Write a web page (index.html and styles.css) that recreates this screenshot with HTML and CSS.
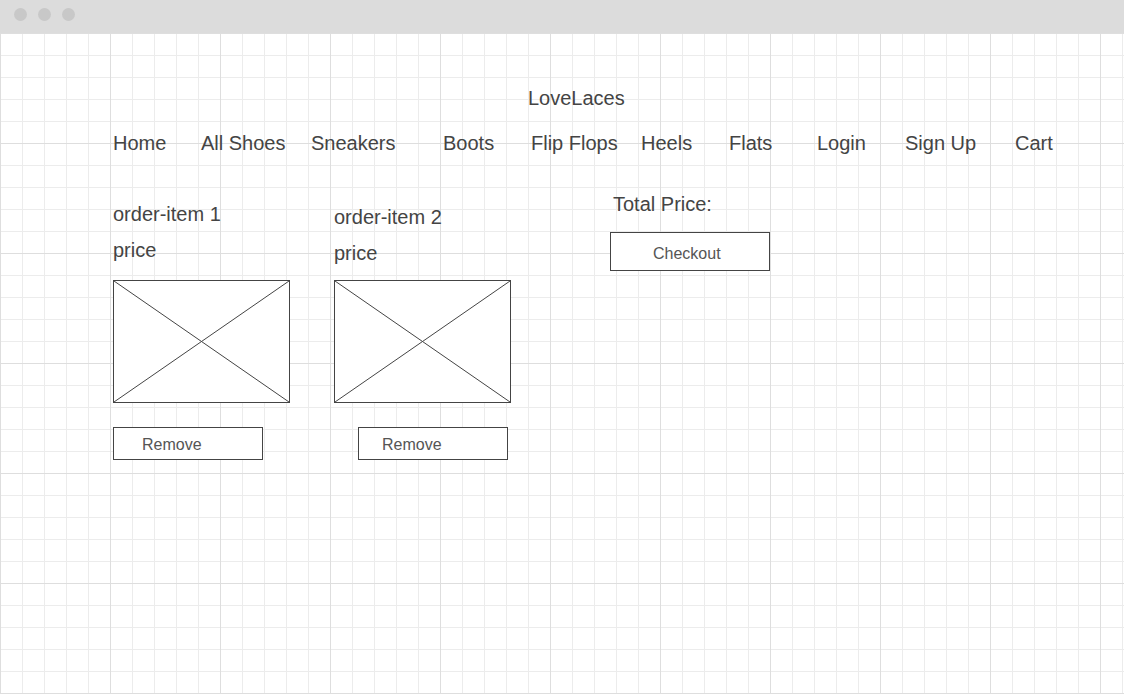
FILE: index.html
```html
<!DOCTYPE html>
<html lang="en">
<head>
    <meta charset="UTF-8">
    <meta name="viewport" content="width=device-width, initial-scale=1.0">
    <title>LoveLaces - Cart</title>
    <link rel="stylesheet" href="styles.css">
</head>
<body>
    <div class="window">
        <!-- Browser chrome -->
        <div class="titlebar">
            <span class="dot"></span>
            <span class="dot"></span>
            <span class="dot"></span>
        </div>

        <div class="canvas">
            <header class="site-header">
                <div class="brand">LoveLaces</div>
                <nav class="nav">
                    <a class="nav-link" href="#">Home</a>
                    <a class="nav-link span-5" href="#">All Shoes</a>
                    <a class="nav-link span-6" href="#">Sneakers</a>
                    <a class="nav-link" href="#">Boots</a>
                    <a class="nav-link span-5" href="#">Flip Flops</a>
                    <a class="nav-link" href="#">Heels</a>
                    <a class="nav-link" href="#">Flats</a>
                    <a class="nav-link" href="#">Login</a>
                    <a class="nav-link span-5" href="#">Sign Up</a>
                    <a class="nav-link" href="#">Cart</a>
                </nav>
            </header>

            <main class="cart">
                <section class="order-item">
                    <div class="item-name">order-item 1</div>
                    <div class="item-price">price</div>
                    <div class="thumb">
                        <svg viewBox="0 0 100 100" preserveAspectRatio="none">
                            <line x1="0" y1="0" x2="100" y2="100" vector-effect="non-scaling-stroke"/>
                            <line x1="100" y1="0" x2="0" y2="100" vector-effect="non-scaling-stroke"/>
                        </svg>
                    </div>
                    <button class="btn btn-remove" type="button">Remove</button>
                </section>

                <section class="order-item order-item-second">
                    <div class="item-name">order-item 2</div>
                    <div class="item-price">price</div>
                    <div class="thumb">
                        <svg viewBox="0 0 100 100" preserveAspectRatio="none">
                            <line x1="0" y1="0" x2="100" y2="100" vector-effect="non-scaling-stroke"/>
                            <line x1="100" y1="0" x2="0" y2="100" vector-effect="non-scaling-stroke"/>
                        </svg>
                    </div>
                    <button class="btn btn-remove" type="button">Remove</button>
                </section>

                <aside class="summary">
                    <div class="summary-title">Total Price:</div>
                    <button class="btn btn-checkout" type="button">Checkout</button>
                </aside>
            </main>
        </div>
    </div>
</body>
</html>
```

FILE: styles.css
```css
body {
    font-family: "Liberation Sans", Arial, sans-serif;
    margin: 0;
    padding: 0;
    background-color: #fff;
    color: #444;
}
.window {
    width: 1124px;
    height: 694px;
    overflow: hidden;
}
.titlebar {
    height: 33px;
    background-color: #dcdcdc;
    display: flex;
    align-items: center;
    gap: 11px;
    padding: 0 0 5px 14px;
    box-sizing: border-box;
}
.dot {
    width: 13px;
    height: 13px;
    border-radius: 50%;
    background-color: #c8c8c8;
}
/* wireframe grid paper */
.canvas {
    height: 661px;
    box-sizing: border-box;
    padding: 53px 0 0 113px;
    background-color: #fff;
    background-image:
        linear-gradient(to right, #dedede 1px, transparent 1px),
        linear-gradient(to bottom, #dedede 1px, transparent 1px),
        linear-gradient(to right, #ececec 1px, transparent 1px),
        linear-gradient(to bottom, #ececec 1px, transparent 1px);
    background-size: 110px 110px, 110px 110px, 22px 22px, 22px 22px;
}
.brand {
    margin-left: 415px;
    font-size: 20px;
    line-height: 24px;
}
.nav {
    display: flex;
    margin-top: 21px;
}
.nav-link {
    width: 88px;
    font-size: 20px;
    line-height: 24px;
    color: #444;
    text-decoration: none;
}
.nav-link.span-5 {
    width: 110px;
}
.nav-link.span-6 {
    width: 132px;
}
.cart {
    display: flex;
    margin-top: 37px;
}
.order-item {
    width: 221px;
    padding-top: 10px;
}
.order-item-second {
    width: 276px;
    padding-top: 13px;
}
.item-name,
.item-price,
.summary-title {
    font-size: 20px;
    line-height: 24px;
}
.item-price {
    margin-top: 12px;
}
.thumb {
    width: 177px;
    height: 123px;
    margin-top: 18px;
    border: 1px solid #444;
    box-sizing: border-box;
    background-color: #fff;
}
.order-item-second .thumb {
    margin-top: 15px;
}
.thumb svg {
    display: block;
    width: 100%;
    height: 100%;
}
.thumb line {
    stroke: #444;
    stroke-width: 1;
}
.btn {
    display: block;
    font-family: "Liberation Sans", Arial, sans-serif;
    font-size: 16px;
    line-height: 18px;
    color: #555;
    background-color: #fff;
    border: 1px solid #444;
    border-radius: 0;
    box-sizing: border-box;
    text-align: left;
    margin: 0;
}
.btn-remove {
    width: 150px;
    height: 33px;
    margin-top: 24px;
    padding: 2px 0 0 28px;
}
.order-item-second .btn-remove {
    margin-left: 24px;
    padding-left: 23px;
}
.summary-title {
    margin-left: 3px;
}
.btn-checkout {
    width: 160px;
    height: 39px;
    margin-top: 16px;
    padding: 4px 0 0 42px;
}
```
